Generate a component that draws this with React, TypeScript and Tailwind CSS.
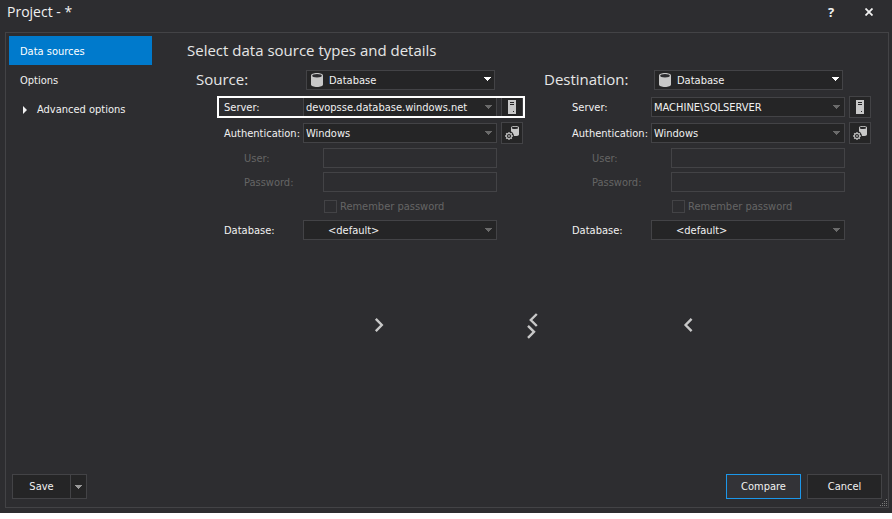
import { useState, type ReactNode } from "react";

const fieldBorder = "border border-[#434346]";

function Arrow({ className }: { className: string }) {
  return (
    <svg viewBox="0 0 8 4" className={`pointer-events-none h-1 fill-current ${className}`} shapeRendering="crispEdges">
      <path d="M0 0h8L4 4z" />
    </svg>
  );
}

function DatabaseIcon() {
  return (
    <svg viewBox="0 0 12 14" className="pointer-events-none absolute left-[5px] top-[3px] h-[14px] w-3">
      <path d="M0 2.500C0 1 2.600 0 6 0s6 1 6 2.500v9C12 13 9.400 14 6 14s-6-1-6-2.500z" fill="#c8c8c8" />
      <ellipse cx="6" cy="2.800" rx="4.800" ry="1.700" fill="#2d2d30" />
    </svg>
  );
}

function ServerIcon() {
  return (
    <svg viewBox="0 0 8 14" className="h-[14px] w-2" shapeRendering="crispEdges">
      <path d="M0 0h8v14H0z" fill="#c8c8c8" />
      <path d="M2 2h4v1H2zM2 4h4v1H2zM5 11h1v1H5z" fill="#252526" />
    </svg>
  );
}

function DatabaseGearIcon() {
  return (
    <svg viewBox="0 0 14 14" className="h-[14px] w-[14px]">
      <path d="M6 1.500C6 .5 7.600 0 10 0s4 .5 4 1.500V8.500c0 1-1.800 1.500-4 1.500H9C8.500 7.500 7.500 6 6 5.500z" fill="#c8c8c8" />
      <ellipse cx="10" cy="1.900" rx="3.200" ry="1.100" fill="#252526" />
      <g fill="none" stroke="#b4b4b4">
        <circle cx="4" cy="10" r="2.600" strokeWidth="1.100" />
        <path d="M4 6v1.500M4 12.500V14M0 10h1.500M6.500 10H8M1.200 7.200l1 1M5.800 11.800l1 1M6.800 7.200l-1 1M2.200 11.800l-1 1" strokeWidth="1.300" />
      </g>
      <circle cx="4" cy="10" r="0.900" fill="#b4b4b4" />
    </svg>
  );
}

function Row({ id, label, children, className = "h-[22px]" }: { id: string; label: string; children: ReactNode; className?: string }) {
  return (
    <div className={`relative flex items-center ${className}`}>
      <label htmlFor={id} className="w-[107px] shrink-0 whitespace-nowrap pl-7 pt-px">
        {label}
      </label>
      {children}
    </div>
  );
}

function Dropdown({ id, value, indent = "pl-[2px]" }: { id: string; value: string; indent?: string }) {
  return (
    <div className="relative min-w-0 flex-1">
      <select id={id} className={`block h-5 w-full appearance-none bg-[#252526] pr-5 pt-px leading-[18px] outline-none ${fieldBorder} ${indent}`}>
        <option>{value}</option>
      </select>
      <Arrow className="absolute right-[5px] top-2 w-[7px] text-[#6a6a6a]" />
    </div>
  );
}

function IconButton({ label, children }: { label: string; children: ReactNode }) {
  return (
    <button aria-label={label} className={`ml-1 flex size-[22px] shrink-0 items-center justify-center bg-[#252526] ${fieldBorder}`}>
      {children}
    </button>
  );
}

function DataSource({ name, server, highlighted }: { name: string; server: string; highlighted?: boolean }) {
  const id = name.toLowerCase();

  return (
    <section>
      <div className="flex h-5 items-start">
        <label htmlFor={`${id}-type`} className="w-[110px] shrink-0 font-['Open_Sans',sans-serif] text-[15px] leading-[18px] text-[#e6e6e6]">
          {name}:
        </label>
        <div className="relative mr-7 flex-1">
          <select id={`${id}-type`} className={`block h-5 w-full appearance-none bg-[#252526] pl-[22px] pt-px leading-[18px] outline-none ${fieldBorder}`}>
            <option>Database</option>
          </select>
          <DatabaseIcon />
          <Arrow className="absolute right-1 top-[7px] w-2 text-white" />
        </div>
      </div>

      <div className="mt-[6px] flex flex-col gap-1">
        <Row id={`${id}-server`} label="Server:">
          <Dropdown id={`${id}-server`} value={server} />
          <IconButton label="Browse servers">
            <ServerIcon />
          </IconButton>
          {highlighted && <div className="pointer-events-none absolute inset-y-0 -right-[2px] left-[21px] border-2 border-white" />}
        </Row>
        <Row id={`${id}-auth`} label="Authentication:">
          <Dropdown id={`${id}-auth`} value="Windows" />
          <IconButton label="Connection settings">
            <DatabaseGearIcon />
          </IconButton>
        </Row>
      </div>

      <div className="ml-5 mr-[26px] mt-1 flex flex-col gap-1 text-[#656565]">
        <Row id={`${id}-user`} label="User:" className="h-5">
          <input id={`${id}-user`} disabled className={`h-5 min-w-0 flex-1 px-1 ${fieldBorder}`} />
        </Row>
        <Row id={`${id}-password`} label="Password:" className="h-5">
          <input id={`${id}-password`} type="password" disabled className={`h-5 min-w-0 flex-1 px-1 ${fieldBorder}`} />
        </Row>
        <label className="ml-[108px] flex h-5 items-center gap-[3px] whitespace-nowrap">
          <input type="checkbox" disabled className={`size-[13px] appearance-none ${fieldBorder}`} />
          <span className="pt-px">Remember password</span>
        </label>
      </div>

      <div className="mr-[26px] mt-1">
        <Row id={`${id}-db`} label="Database:" className="h-5">
          <Dropdown id={`${id}-db`} value="<default>" indent="pl-6" />
        </Row>
      </div>
    </section>
  );
}

const copyActions = [
  { label: "Copy to destination", d: "M8.800 6.800l6 6.200-6 6.200" },
  { label: "Swap", d: "M14.800 2l-6 6 6 6M6 13.800l6 6-6 6" },
  { label: "Copy to source", d: "M14.600 6.800l-6 6.200 6 6.200" },
];

export default function App() {
  const [page, setPage] = useState("Data sources");

  return (
    <div className="flex h-screen flex-col bg-white pb-[6px] font-['DejaVu_Sans_Condensed','DejaVu_Sans',sans-serif] text-[11px] leading-4 text-[#f1f1f1]">
      <div className="flex min-h-0 flex-1 flex-col bg-[#2d2d30] pb-[5px] pl-[5px] pr-[3px]">
        <header className="flex h-8 items-start justify-between pl-[2px] pr-[10px] pt-[2px]">
          <h1 className="font-['Open_Sans',sans-serif] text-[14px] leading-5">Project - *</h1>
          <div className="flex gap-[18px]">
            <button aria-label="Help" className="size-5 font-['Open_Sans',sans-serif] text-[13px] font-bold leading-5">
              ?
            </button>
            <button aria-label="Close" className="flex size-5 items-center justify-center">
              <svg viewBox="0 0 8 8" className="size-2 stroke-current" fill="none" strokeWidth="1.800">
                <path d="M.5.5l7 7M7.500.5l-7 7" />
              </svg>
            </button>
          </div>
        </header>

        <main className="relative flex min-h-0 flex-1 flex-col border border-[#434346]">
          <div className="flex min-h-0 flex-1">
            <nav className="flex w-[146px] shrink-0 flex-col pl-[3px] pt-[3px]">
              {["Data sources", "Options"].map((item) => (
                <button
                  key={item}
                  onClick={() => setPage(item)}
                  className={`h-[29px] pl-[11px] pt-[2px] text-left ${page === item ? "bg-[#007acc] text-white" : ""}`}
                >
                  {item}
                </button>
              ))}
              <button className="flex h-[29px] items-center gap-[10px] whitespace-nowrap pl-[14px] pt-[2px]">
                <svg viewBox="0 0 4 8" className="h-2 w-1 fill-current">
                  <path d="M0 0l4 4-4 4z" />
                </svg>
                Advanced options
              </button>
            </nav>

            <div className="min-w-0 flex-1 pl-[35px] pr-[17px] pt-[5px]">
              <h2 className="font-['Open_Sans',sans-serif] text-[15px] leading-6 text-[#e6e6e6]">Select data source types and details</h2>
              <div className="ml-[9px] mt-2 grid grid-cols-2 gap-[21px]">
                <DataSource name="Source" server="devopsse.database.windows.net" highlighted />
                <DataSource name="Destination" server="MACHINE\SQLSERVER" />
              </div>
              <div className="ml-[9px] mt-[72px] flex justify-center gap-[131px]">
                {copyActions.map(({ label, d }) => (
                  <button key={label} aria-label={label} className="h-7 w-6">
                    <svg viewBox="0 0 24 28" className="h-7 w-6" fill="none" stroke="#c8c8c8" strokeWidth="2.400">
                      <path d={d} />
                    </svg>
                  </button>
                ))}
              </div>
            </div>
          </div>

          <footer className="flex items-center px-[6px] pb-2">
            <div className={`flex h-[25px] bg-[#252526] ${fieldBorder}`}>
              <button className="w-[57px] pt-px">Save</button>
              <button aria-label="More save options" className="flex w-4 items-center justify-center border-l border-[#434346]">
                <Arrow className="w-[7px] text-[#999999]" />
              </button>
            </div>
            <button className="ml-auto h-[25px] w-[75px] border border-[#1c97ea] bg-[#333337] pt-px">Compare</button>
            <button className={`ml-[6px] h-[25px] w-[75px] bg-[#252526] pt-px ${fieldBorder}`}>Cancel</button>
          </footer>

          <svg viewBox="0 0 8 8" className="absolute bottom-0 right-0 size-2" fill="#7a7a7a" shapeRendering="crispEdges">
            <path d="M6 0h1v1H6zM4 2h1v1H4zM6 2h1v1H6zM2 4h1v1H2zM4 4h1v1H4zM6 4h1v1H6zM0 6h1v1H0zM2 6h1v1H2zM4 6h1v1H4zM6 6h1v1H6z" />
          </svg>
        </main>
      </div>
    </div>
  );
}
